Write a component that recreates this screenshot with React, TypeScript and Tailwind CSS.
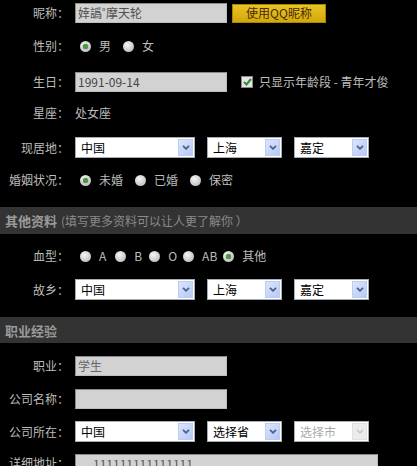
import React from "react";

const font = "font-['Noto_Sans_CJK_SC','Liberation_Sans',sans-serif]";

function Label({ children }: { children: React.ReactNode }) {
  return <div className="w-[69px] shrink-0 text-right text-[12px] text-[#bdbdbd] leading-none">{children}</div>;
}

function Row({ h, label, children }: { h: string; label: string; children?: React.ReactNode }) {
  return (
    <div className={`flex items-center ${h}`}>
      <Label>{label}</Label>
      <div className="ml-[6px] flex items-center">{children}</div>
    </div>
  );
}

function Radio({ on }: { on?: boolean }) {
  return (
    <span className="w-[11px] h-[11px] shrink-0 rounded-full bg-[radial-gradient(circle_at_40%_35%,#f6f6f6,#c4c4c4_70%,#a9a9a9)] flex items-center justify-center">
      {on && <span className="w-[5px] h-[5px] rounded-full bg-[#4a9a3e] shadow-[0_0_1px_#2d6b2d]" />}
    </span>
  );
}

function Opt({ on, text, after }: { on?: boolean; text: string; after: string }) {
  return (
    <div className={`flex items-center ${after}`}>
      <Radio on={on} />
      <span className="ml-[8px] text-[12px] leading-none text-[#bdbdbd]">{text}</span>
    </div>
  );
}

function Chevron({ color }: { color: string }) {
  return (
    <svg width="8" height="5" viewBox="0 0 8 5">
      <path d="M1 0.8 L4 3.8 L7 0.8" fill="none" stroke={color} strokeWidth="1.8" />
    </svg>
  );
}

function Select({ w, text, disabled }: { w: string; text: string; disabled?: boolean }) {
  return (
    <div className={`${w} h-[21px] flex bg-white border border-[#a5acb2] shrink-0`}>
      <div className={`flex-1 flex items-center pl-[5px] text-[12px] leading-none ${disabled ? "text-[#aaaaaa]" : "text-black"}`}>
        {text}
      </div>
      <div
        className={`w-[15px] my-[1px] mr-[1px] flex items-center justify-center border ${
          disabled
            ? "bg-[#ececec] border-[#e0e0e0]"
            : "bg-[linear-gradient(135deg,#dbe5fd,#b6c9f6)] border-[#bccdf3]"
        }`}
      >
        <Chevron color={disabled ? "#c9c9c9" : "#4d6185"} />
      </div>
    </div>
  );
}

function Input({ w, text, pl = "pl-[2px]", color = "text-[#4a4a4a]" }: { w: string; text?: string; pl?: string; color?: string }) {
  return (
    <div className={`${w} h-[20px] flex items-center bg-[#d2d2d2] border border-t-[#8a8a8a] border-l-[#8a8a8a] border-r-[#bdbdbd] border-b-[#bdbdbd] ${pl} text-[12px] leading-none ${color}`}>
      {text}
    </div>
  );
}

function Header({ h, title, sub }: { h: string; title: string; sub?: string }) {
  return (
    <div className={`${h} bg-[#333333] flex items-center pl-[5px]`}>
      <span className="text-[13px] font-bold text-[#9a9a9a] leading-none">{title}</span>
      {sub && <span className="text-[12px] text-[#8a8a8a] leading-none ml-[4px]">{sub}</span>}
    </div>
  );
}

export default function App() {
  return (
    <div className={`w-[417px] h-[466px] bg-black overflow-hidden ${font}`}>
      <div className="flex items-center h-[26px]">
        <Label>昵称：</Label>
        <div className="ml-[6px] flex items-center">
          <Input w="w-[152px]" text="婞譌˚摩天轮" color="text-[#505050]" />
          <div className="ml-[5px] w-[94px] h-[19px] flex items-center justify-center bg-[linear-gradient(#e8c426,#d2a80c)] border border-[#a88600] text-[12px] leading-none text-[#4a2a00]">
            使用QQ昵称
          </div>
        </div>
      </div>
      <Row h="h-[40px]" label="性别：">
        <div className="ml-[5px] flex items-center">
          <Opt on text="男" after="mr-[12px]" />
          <Opt text="女" after="" />
        </div>
      </Row>
      <div className="flex items-center h-[32px]">
        <Label>生日：</Label>
        <div className="ml-[6px] flex items-center">
          <Input w="w-[152px]" text="1991-09-14" color="text-[#444444]" />
          <div className="ml-[14px] w-[12px] h-[12px] bg-[#e6e6e6] border border-[#8a8a8a] flex items-center justify-center">
            <svg width="9" height="8" viewBox="0 0 9 8">
              <path d="M1 4 L3.5 6.5 L8 1" fill="none" stroke="#2f8f2f" strokeWidth="2" />
            </svg>
          </div>
          <span className="ml-[6px] text-[12px] leading-none text-[#bdbdbd]">只显示年龄段 - 青年才俊</span>
        </div>
      </div>
      <Row h="h-[30px]" label="星座：">
        <span className="text-[12px] leading-none text-[#bdbdbd]">处女座</span>
      </Row>
      <Row h="h-[39px]" label="现居地：">
        <Select w="w-[120px]" text="中国" />
        <div className="ml-[12px]"><Select w="w-[75px]" text="上海" /></div>
        <div className="ml-[12px]"><Select w="w-[75px]" text="嘉定" /></div>
      </Row>
      <Row h="h-[26px]" label="婚姻状况：">
        <div className="ml-[5px] flex items-center">
          <Opt on text="未婚" after="mr-[12px]" />
          <Opt text="已婚" after="mr-[12px]" />
          <Opt text="保密" after="" />
        </div>
      </Row>
      <div className="h-[14px]" />
      <Header h="h-[27px]" title="其他资料" sub="(填写更多资料可以让人更了解你 ）" />
      <Row h="h-[44px]" label="血型：">
        <div className="ml-[5px] flex items-center">
          <Opt text="A" after="mr-[9px]" />
          <Opt text="B" after="mr-[7px]" />
          <Opt text="O" after="mr-[6px]" />
          <Opt text="AB" after="mr-[6px]" />
          <Opt on text="其他" after="" />
        </div>
      </Row>
      <Row h="h-[23px]" label="故乡：">
        <Select w="w-[120px]" text="中国" />
        <div className="ml-[12px]"><Select w="w-[75px]" text="上海" /></div>
        <div className="ml-[12px]"><Select w="w-[75px]" text="嘉定" /></div>
      </Row>
      <div className="h-[16px]" />
      <Header h="h-[26px]" title="职业经验" />
      <Row h="h-[46px]" label="职业：">
        <Input w="w-[152px]" text="学生" color="text-[#666666]" />
      </Row>
      <Row h="h-[20px]" label="公司名称：">
        <Input w="w-[152px]" />
      </Row>
      <Row h="h-[45px]" label="公司所在：">
        <Select w="w-[120px]" text="中国" />
        <div className="ml-[12px]"><Select w="w-[75px]" text="选择省" /></div>
        <div className="ml-[12px]"><Select w="w-[75px]" text="选择市" disabled /></div>
      </Row>
      <Row h="h-[18px]" label="详细地址：">
        <div className="mt-[2px]">
          <Input w="w-[303px]" text="111111111111111" pl="pl-[17px]" color="text-[#555555]" />
        </div>
      </Row>
    </div>
  );
}
